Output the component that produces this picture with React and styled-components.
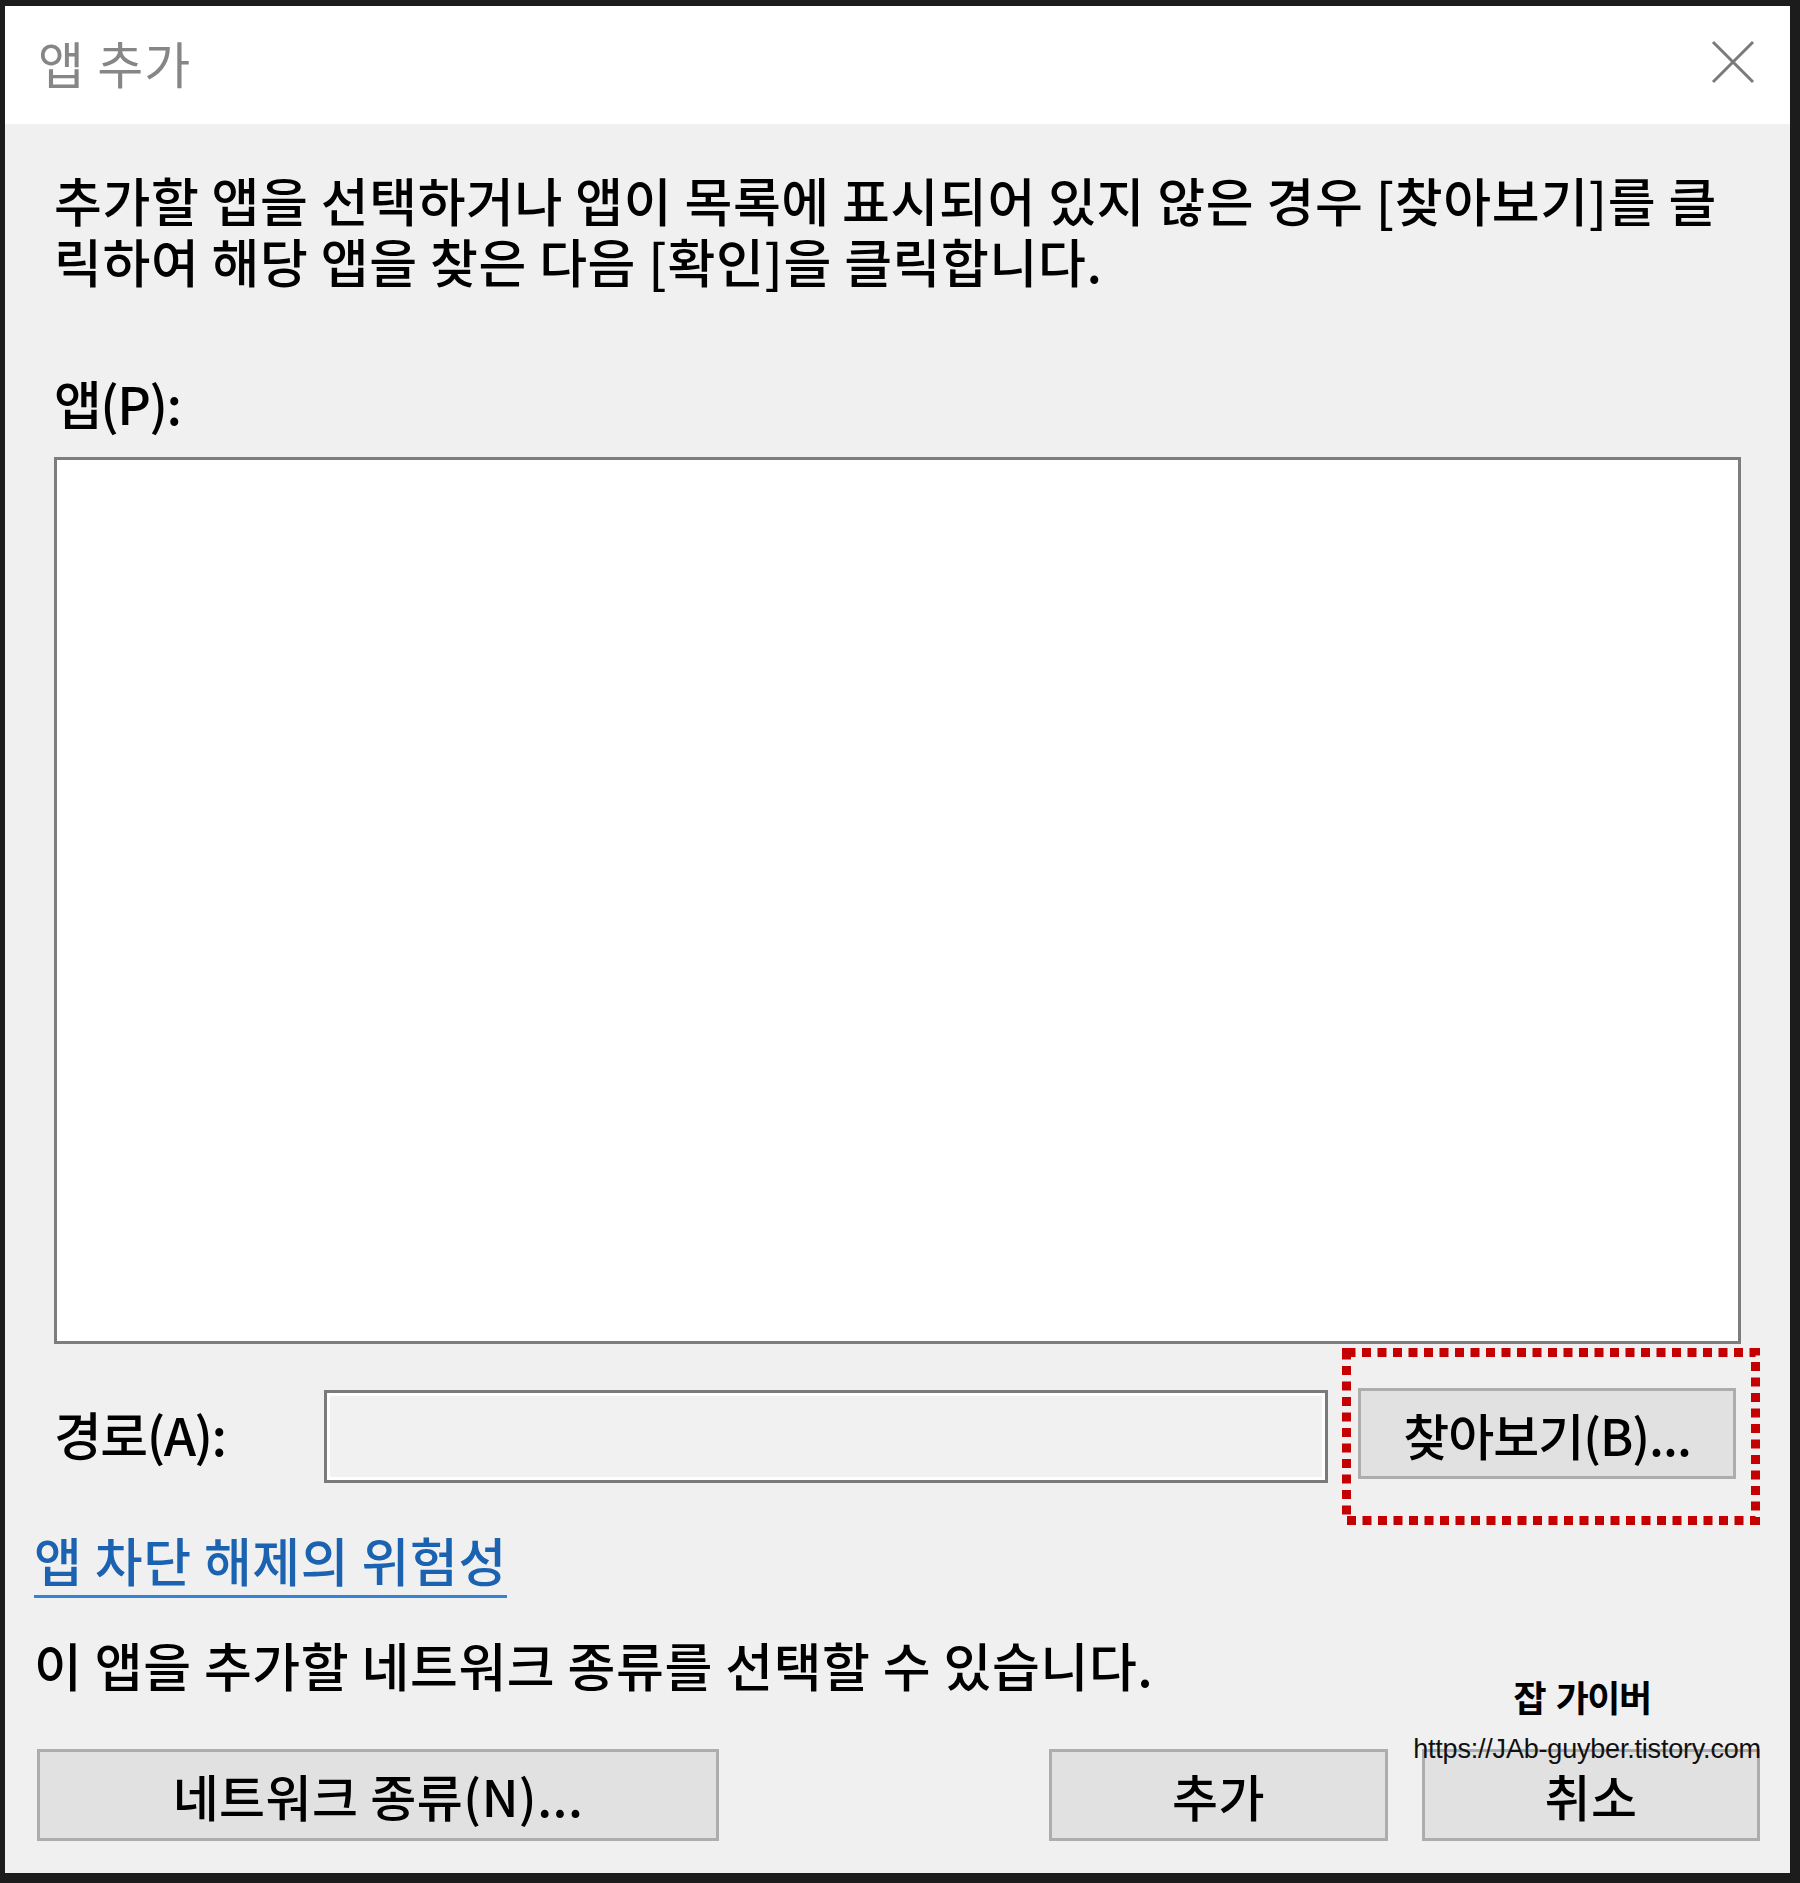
import React from "react";
import styled, { createGlobalStyle } from "styled-components";

const GlobalStyle = createGlobalStyle`
  html, body {
    margin: 0;
    padding: 0;
    background: #1c1c1c;
  }
  body {
    font-family: "Noto Sans CJK KR", "Noto Sans", sans-serif;
  }
`;

const Frame = styled.div`
  width: 1800px;
  height: 1883px;
  box-sizing: border-box;
  padding: 6px 10px 10px 5px;
  background: #1c1c1c;
  display: flex;
`;

const Dialog = styled.div`
  position: relative;
  flex: 1;
  display: flex;
  flex-direction: column;
  background: #f0f0f0;
  color: #000;
`;

const TitleBar = styled.div`
  height: 118px;
  box-sizing: border-box;
  padding: 0 35px 6px 33px;
  background: #fff;
  display: flex;
  align-items: center;
  justify-content: space-between;
`;

const Title = styled.div`
  font-size: 50px;
  line-height: 60px;
  color: #868686;
  letter-spacing: 1px;
`;

const CloseButton = styled.div`
  width: 44px;
  height: 44px;
  display: flex;
  align-items: center;
  justify-content: center;
`;

const Content = styled.div`
  padding: 45px 49px 0 49px;
  display: flex;
  flex-direction: column;
`;

const Text = styled.p`
  margin: ${(p) => p.$mt || 0}px 0 0 0;
  font-size: 52px;
  font-weight: 500;
  line-height: 61px;
  letter-spacing: ${(p) => (p.$tight ? "-1.5px" : "0.6px")};
`;

const ListBox = styled.div`
  margin-top: 24px;
  height: 887px;
  box-sizing: border-box;
  border: 3px solid #7d7d7d;
  background: #fff;
`;

const PathRow = styled.div`
  margin-top: 40px;
  padding-right: 5px;
  display: grid;
  grid-template-columns: 240px 1fr 378px;
  column-gap: 30px;
  align-items: center;
`;

const Label = styled.span`
  font-size: 52px;
  font-weight: 500;
  line-height: 60px;
  letter-spacing: -1.5px;
`;

const PathInput = styled.div`
  height: 93px;
  margin-top: 6px;
  box-sizing: border-box;
  border: 3px solid #7a7a7a;
  box-shadow: inset 0 0 0 3px #fff;
  background: #f1f1f1;
`;

const BrowseCell = styled.div`
  position: relative;
`;

const Button = styled.div`
  width: ${(p) => p.$w}px;
  height: ${(p) => p.$h || 92}px;
  box-sizing: border-box;
  border: 3px solid #adadad;
  background: #e1e1e1;
  display: flex;
  align-items: center;
  justify-content: center;
  font-size: 50px;
  font-weight: 500;
  line-height: 60px;
  letter-spacing: ${(p) => (p.$tight ? "-1px" : "0.5px")};
  color: #000;
`;

const Highlight = styled.svg`
  position: absolute;
  left: -16px;
  top: -40px;
  pointer-events: none;
`;

const Footer = styled.div`
  padding: 47px 30px 0 29px;
  display: flex;
  flex-direction: column;
  align-items: flex-start;
`;

const Link = styled.span`
  display: inline-block;
  font-size: 52px;
  font-weight: 500;
  line-height: 60px;
  letter-spacing: 0.6px;
  color: #1b62b0;
  padding-bottom: 5px;
  border-bottom: 3px solid #3584d4;
`;

const ButtonRow = styled.div`
  align-self: stretch;
  margin-top: 54px;
  padding-left: 3px;
  display: flex;
  gap: 34px;
  & > :first-child {
    margin-right: auto;
  }
`;

const Watermark = styled.div`
  position: absolute;
  left: 1402px;
  top: 1665px;
  width: 360px;
  display: flex;
  flex-direction: column;
  align-items: center;
  pointer-events: none;
`;

const WatermarkName = styled.div`
  font-size: 36px;
  font-weight: 700;
  line-height: 50px;
  letter-spacing: -1.5px;
  word-spacing: 4px;
  color: #000;
  margin-left: -10px;
`;

const WatermarkUrl = styled.div`
  margin-top: 13px;
  font-family: "Liberation Sans", Arial, sans-serif;
  font-size: 27px;
  line-height: 30px;
  color: #111;
  letter-spacing: -0.2px;
`;

function CloseIcon() {
  return (
    <svg width="44" height="44" viewBox="0 0 44 44">
      <line x1="2" y1="2" x2="42" y2="42" stroke="#7a7a7a" strokeWidth="3" />
      <line x1="42" y1="2" x2="2" y2="42" stroke="#7a7a7a" strokeWidth="3" />
    </svg>
  );
}

function DottedBox() {
  return (
    <Highlight width="418" height="177" viewBox="0 0 418 177">
      <rect
        x="4.5"
        y="4.5"
        width="409"
        height="168"
        fill="none"
        stroke="#c40000"
        strokeWidth="9"
        strokeDasharray="9 6.5"
      />
    </Highlight>
  );
}

export default function App() {
  return (
    <>
      <GlobalStyle />
      <Frame>
        <Dialog>
          <TitleBar>
            <Title>앱 추가</Title>
            <CloseButton>
              <CloseIcon />
            </CloseButton>
          </TitleBar>

          <Content>
            <Text>
              추가할 앱을 선택하거나 앱이 목록에 표시되어 있지 않은 경우 [찾아보기]를 클
              <br />
              릭하여 해당 앱을 찾은 다음 [확인]을 클릭합니다.
            </Text>
            <Text $mt={81} $tight>앱(P):</Text>
            <ListBox />
            <PathRow>
              <Label>경로(A):</Label>
              <PathInput />
              <BrowseCell>
                <Button $w={378} $h={91} $tight>찾아보기(B)...</Button>
                <DottedBox />
              </BrowseCell>
            </PathRow>
          </Content>

          <Footer>
            <Link>앱 차단 해제의 위험성</Link>
            <Text $mt={36}>이 앱을 추가할 네트워크 종류를 선택할 수 있습니다.</Text>
            <ButtonRow>
              <Button $w={682}>네트워크 종류(N)...</Button>
              <Button $w={339}>추가</Button>
              <Button $w={338}>취소</Button>
            </ButtonRow>
          </Footer>

          <Watermark>
            <WatermarkName>잡 가이버</WatermarkName>
            <WatermarkUrl>https://JAb-guyber.tistory.com</WatermarkUrl>
          </Watermark>
        </Dialog>
      </Frame>
    </>
  );
}
